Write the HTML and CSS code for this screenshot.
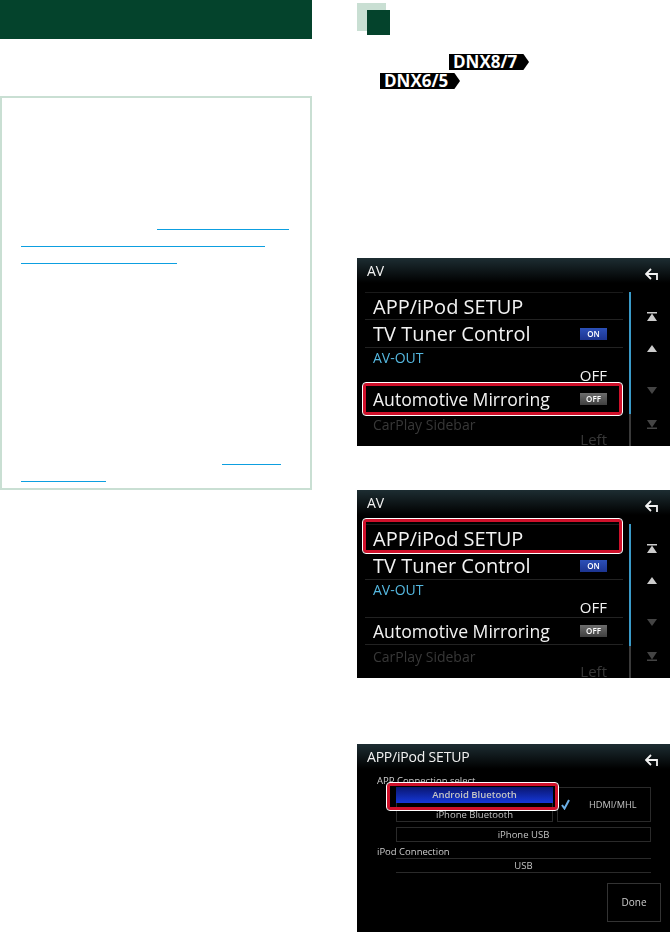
FILE: index.html
```html
<!DOCTYPE html>
<html lang="en">
<head>
    <meta charset="UTF-8">
    <meta name="viewport" content="width=device-width, initial-scale=1.0">
    <title>AV setup</title>
    <link rel="stylesheet" href="styles.css">
</head>
<body>
    <div class="page">
        <div class="left-col">
            <div class="title-bar"></div>
            <div class="note-box">
                <a class="link link-a" href="#"></a>
                <a class="link link-b" href="#"></a>
                <a class="link link-c" href="#"></a>
                <a class="link link-d" href="#"></a>
                <a class="link link-e" href="#"></a>
            </div>
        </div>

        <div class="right-col">
            <div class="step-mark"><div class="step-mark-inner"></div></div>
            <div class="badge badge-first">DNX8/7</div>
            <div class="badge badge-second">DNX6/5</div>

            <!-- first screen, mirroring row marked -->
            <div class="screen screen-first">
                <div class="screen-head">
                    <span>AV</span>
                    <svg class="back" viewBox="0 0 13 13"><path d="M6 1 L1 6 L6 11 M1 6 H12 V12"/></svg>
                </div>
                <div class="screen-body">
                    <div class="list">
                        <div class="row row-app"><span>APP/iPod SETUP</span></div>
                        <div class="row row-tv"><span>TV Tuner Control</span><span class="toggle toggle-on">ON</span></div>
                        <div class="row row-out"><span class="row-label">AV-OUT</span><span class="row-value">OFF</span></div>
                        <div class="row row-mirror"><span>Automotive Mirroring</span><span class="toggle">OFF</span></div>
                        <div class="row row-sidebar"><span class="row-dim">CarPlay Sidebar</span><span class="row-dim-value">Left</span></div>
                    </div>
                    <div class="scrollbar"></div>
                    <div class="side-buttons">
                        <svg class="side-btn" viewBox="0 0 10 9"><path d="M0 0 H10 V1.5 H0 Z M5 1.5 L10 9 H0 Z"/></svg>
                        <svg class="side-btn" viewBox="0 0 10 9"><path d="M5 1 L10 8 H0 Z"/></svg>
                        <svg class="side-btn side-btn-off side-btn-down" viewBox="0 0 10 9"><path d="M0 1 H10 L5 8 Z"/></svg>
                        <svg class="side-btn side-btn-off side-btn-end" viewBox="0 0 10 9"><path d="M0 0 H10 L5 7.5 Z M0 7.5 H10 V9 H0 Z"/></svg>
                    </div>
                </div>
                <div class="marker marker-mirror"></div>
            </div>

            <!-- second screen, app row marked -->
            <div class="screen screen-second">
                <div class="screen-head">
                    <span>AV</span>
                    <svg class="back" viewBox="0 0 13 13"><path d="M6 1 L1 6 L6 11 M1 6 H12 V12"/></svg>
                </div>
                <div class="screen-body">
                    <div class="list">
                        <div class="row row-app"><span>APP/iPod SETUP</span></div>
                        <div class="row row-tv"><span>TV Tuner Control</span><span class="toggle toggle-on">ON</span></div>
                        <div class="row row-out"><span class="row-label">AV-OUT</span><span class="row-value">OFF</span></div>
                        <div class="row row-mirror"><span>Automotive Mirroring</span><span class="toggle">OFF</span></div>
                        <div class="row row-sidebar"><span class="row-dim">CarPlay Sidebar</span><span class="row-dim-value">Left</span></div>
                    </div>
                    <div class="scrollbar"></div>
                    <div class="side-buttons">
                        <svg class="side-btn" viewBox="0 0 10 9"><path d="M0 0 H10 V1.5 H0 Z M5 1.5 L10 9 H0 Z"/></svg>
                        <svg class="side-btn" viewBox="0 0 10 9"><path d="M5 1 L10 8 H0 Z"/></svg>
                        <svg class="side-btn side-btn-off side-btn-down" viewBox="0 0 10 9"><path d="M0 1 H10 L5 8 Z"/></svg>
                        <svg class="side-btn side-btn-off side-btn-end" viewBox="0 0 10 9"><path d="M0 0 H10 L5 7.5 Z M0 7.5 H10 V9 H0 Z"/></svg>
                    </div>
                </div>
                <div class="marker marker-app"></div>
            </div>

            <!-- third screen, connection select -->
            <div class="screen screen-third">
                <div class="screen-head">
                    <span class="head-large">APP/iPod SETUP</span>
                    <svg class="back" viewBox="0 0 13 13"><path d="M6 1 L1 6 L6 11 M1 6 H12 V12"/></svg>
                </div>
                <div class="group-label group-label-first">APP Connection select</div>
                <div class="options">
                    <div class="option option-active">Android Bluetooth</div>
                    <div class="option option-hdmi">
                        <svg class="check" viewBox="0 0 9 11"><path d="M1 6 L3.5 9.5 L8 1"/></svg>
                        <span>HDMI/MHL</span>
                    </div>
                    <div class="option option-iphone">iPhone Bluetooth</div>
                    <div class="option option-wide">iPhone USB</div>
                </div>
                <div class="group-label">iPod Connection</div>
                <div class="option option-usb">USB</div>
                <div class="done">Done</div>
                <div class="marker marker-android"></div>
            </div>
        </div>
    </div>
</body>
</html>
```

FILE: styles.css
```css
body {
    margin: 0;
    background-color: #fff;
    font-family: "Open Sans", sans-serif;
    overflow: hidden;
}

.page {
    display: flex;
    gap: 45px;
    width: 670px;
    height: 932px;
    overflow: hidden;
}

.left-col {
    width: 312px;
    flex-shrink: 0;
}

.title-bar {
    height: 39px;
    margin-bottom: 57px;
    background-color: #04432c;
}

.note-box {
    box-sizing: border-box;
    height: 394px;
    padding: 131px 0 0 19px;
    border: 2px solid #c9dfd3;
}

.link {
    display: block;
    height: 1px;
    margin-bottom: 16px;
    background-color: #0d9fe0;
}

.link-a {
    width: 132px;
    margin-left: 136px;
}

.link-b {
    width: 244px;
}

.link-c {
    width: 156px;
    margin-bottom: 200px;
}

.link-d {
    width: 59px;
    margin-left: 201px;
}

.link-e {
    width: 85px;
}

.right-col {
    flex: 1;
    min-width: 0;
    padding-top: 3px;
}

.step-mark {
    display: flow-root;
    width: 29px;
    height: 28px;
    background-color: #c9dfd3;
}

.step-mark-inner {
    width: 23px;
    height: 25px;
    margin: 7px 0 0 10px;
    background-color: #04432c;
}

.badge {
    box-sizing: border-box;
    width: 80px;
    height: 16px;
    padding-left: 4px;
    background-color: #000;
    color: #fff;
    font-size: 17px;
    font-weight: 700;
    line-height: 16px;
    white-space: nowrap;
    clip-path: polygon(0 0, 93% 0, 100% 50%, 93% 100%, 0 100%);
}

.badge-first {
    margin: 23px 0 3px 92px;
}

.badge-second {
    margin-left: 23px;
}

.screen {
    position: relative;
    height: 188px;
    overflow: hidden;
    background-color: #000;
    color: #f2f2f2;
    filter: blur(0.4px);
}

.screen-first {
    margin-top: 169px;
}

.screen-second {
    margin-top: 44px;
}

.screen-third {
    margin-top: 66px;
}

.screen-head {
    display: flex;
    justify-content: space-between;
    align-items: center;
    height: 25px;
    padding: 0 12px 0 10px;
    background: linear-gradient(#1d2d32, #000);
    font-size: 14px;
}

.head-large {
    font-size: 14px;
    letter-spacing: -0.2px;
}

.back {
    width: 13px;
    height: 13px;
    margin-top: 7px;
    fill: none;
    stroke: #f2f2f2;
    stroke-width: 1.8;
}

.screen-body {
    display: flex;
    padding-top: 9px;
}

.list {
    box-sizing: border-box;
    width: 258px;
    margin-left: 8px;
    border-top: 1px solid #1a1a1a;
}

.row {
    box-sizing: border-box;
    display: flex;
    justify-content: space-between;
    align-items: center;
    padding: 0 16px 0 8px;
    border-bottom: 1px solid #222;
    font-size: 20px;
    line-height: 26px;
}

.row-app {
    height: 27px;
    padding-top: 1px;
}

.row-tv {
    height: 28px;
}

.row-out {
    height: 38px;
    align-items: flex-start;
}

.row-mirror {
    height: 27px;
    font-size: 17.6px;
}

.row-sidebar {
    height: 50px;
    align-items: flex-start;
    border-bottom: none;
}

.row-label {
    font-size: 14px;
    line-height: 20px;
    color: #55b8e0;
}

.row-value {
    align-self: flex-end;
    margin-bottom: 1px;
    font-size: 15px;
    font-weight: 500;
    line-height: 17px;
}

.row-dim {
    padding-top: 2px;
    font-size: 14px;
    line-height: 20px;
    color: #383838;
}

.row-dim-value {
    padding-top: 18px;
    font-size: 15px;
    line-height: 17px;
    color: #383838;
}

.toggle {
    box-sizing: border-box;
    width: 27px;
    height: 12px;
    background: linear-gradient(#6d6d6d, #3f3f3f);
    color: #fff;
    font-size: 8px;
    font-weight: 600;
    line-height: 12px;
    text-align: center;
}

.toggle-on {
    background: linear-gradient(#2c50b8, #1c3490);
}

.scrollbar {
    width: 2px;
    height: 155px;
    margin-left: 6px;
    background: linear-gradient(#3a9ac8 79%, #3a3a3a 79%);
}

.side-buttons {
    display: flex;
    flex-direction: column;
    gap: 23px;
    margin: 20px 0 0 16px;
}

.side-btn {
    display: block;
    flex-shrink: 0;
    width: 10px;
    height: 9px;
    fill: #ccc;
}

.side-btn-off {
    fill: #444;
}

.side-btn-down {
    margin-top: 10px;
}

.side-btn-end {
    margin-top: 2px;
}

.marker {
    position: absolute;
    box-sizing: border-box;
    border: 3px solid #d0112b;
    border-radius: 3px;
    outline: 1px solid #fff;
}

.marker-mirror {
    top: 125px;
    left: 6px;
    width: 259px;
    height: 32px;
}

.marker-app {
    top: 29px;
    left: 6px;
    width: 259px;
    height: 34px;
}

.marker-android {
    top: 39px;
    left: 30px;
    width: 171px;
    height: 27px;
}

.group-label {
    padding-left: 20px;
    font-size: 9.5px;
    line-height: 12px;
    color: #ccc;
}

.group-label-first {
    margin-top: 6px;
}

.options {
    display: grid;
    grid-template-columns: 157px 94px;
    grid-template-rows: 16px 19px 20px;
    column-gap: 4px;
    margin: 0 0 4px 39px;
}

.option {
    box-sizing: border-box;
    border: 1px solid #2a2a2a;
    color: #c4c4c4;
    font-size: 9.5px;
    line-height: 14px;
    text-align: center;
}

.option-active {
    border: none;
    background: linear-gradient(#0a1670, #1538d8);
    font-weight: 600;
    line-height: 16px;
}

.option-hdmi {
    grid-column: 2;
    grid-row: 1 / span 2;
    display: flex;
    align-items: center;
    gap: 19px;
    padding-left: 3px;
    font-size: 9.2px;
    font-weight: 500;
}

.option-iphone {
    grid-column: 1;
    grid-row: 2;
    padding-top: 5px;
    border-top: none;
}

.option-wide {
    grid-column: 1 / span 2;
    height: 15px;
    margin-top: 5px;
}

.option-usb {
    width: 255px;
    height: 15px;
    margin-left: 39px;
    border-left: none;
    border-right: none;
}

.check {
    flex-shrink: 0;
    width: 9px;
    height: 11px;
    fill: none;
    stroke: #6cb0e8;
    stroke-width: 2;
}

.done {
    box-sizing: border-box;
    width: 54px;
    height: 39px;
    margin: 10px 0 0 250px;
    border: 1px solid #333;
    color: #ccc;
    font-size: 10px;
    line-height: 37px;
    text-align: center;
}
```
